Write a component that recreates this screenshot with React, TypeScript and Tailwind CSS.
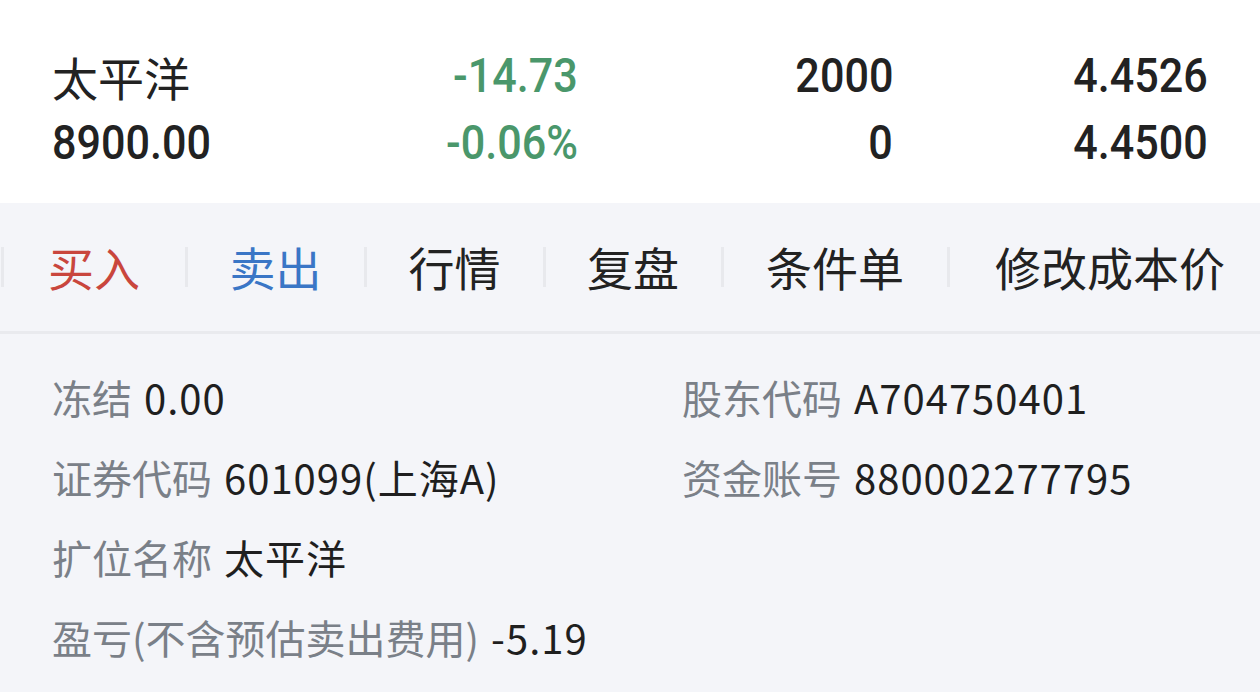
const quote = [
  { name: "太平洋", change: "-14.73", qty: "2000", cost: "4.4526" },
  { name: "8900.00", change: "-0.06%", qty: "0", cost: "4.4500" },
];

const tabs = [
  { label: "买入", color: "text-[#c9463d]", w: "w-[180px]" },
  { label: "卖出", color: "text-[#3a76c6]", w: "w-[175px]" },
  { label: "行情", color: "text-[#222222]", w: "w-[175px]" },
  { label: "复盘", color: "text-[#222222]", w: "w-[174px]" },
  { label: "条件单", color: "text-[#222222]", w: "w-[222px]" },
  { label: "修改成本价", color: "text-[#222222]", w: "w-[320px]" },
];

const details = [
  { label: "冻结", value: "0.00" },
  { label: "股东代码", value: "A704750401" },
  { label: "证券代码", value: "601099(上海A)" },
  { label: "资金账号", value: "880002277795" },
  { label: "扩位名称", value: "太平洋" },
  { label: "", value: "" },
];

const Num = ({ text, origin }: { text: string; origin: string }) => (
  <span className={`inline-block scale-x-[0.88] ${origin}`}>{text}</span>
);

export default function App() {
  return (
    <div className="w-[1260px] h-[692px] overflow-hidden bg-[#f4f5f9] font-['Roboto','Noto_Sans_CJK_SC',sans-serif]">
      {/* Position summary */}
      <div className="bg-white h-[203px] px-[52px] pt-[42px]">
        {quote.map((row, i) => (
          <div
            key={i}
            className="grid grid-cols-[211px_315px_315px_315px] h-[67px] items-center leading-none font-medium text-[#222222]"
          >
            <div className={i === 0 ? "text-[46px] font-normal font-['Noto_Sans_CJK_SC',sans-serif]" : "text-[49px]"}>
              {i === 0 ? row.name : <Num text={row.name} origin="origin-left" />}
            </div>
            <div className="text-right text-[49px] text-[#4a976b]">
              <Num text={row.change} origin="origin-right" />
            </div>
            <div className="text-right text-[49px]">
              <Num text={row.qty} origin="origin-right" />
            </div>
            <div className="text-right text-[49px]">
              <Num text={row.cost} origin="origin-right" />
            </div>
          </div>
        ))}
      </div>

      {/* Actions */}
      <div className="h-[131px] flex items-center border-b-[3px] border-[#e9eaee] whitespace-nowrap font-['Noto_Sans_CJK_SC',sans-serif]">
        {tabs.map((t) => (
          <div key={t.label} className="flex items-center shrink-0">
            <div className="w-[3px] h-[40px] bg-[#e8e9ed] ml-px" />
            <div className={`${t.w} text-center text-[46px] leading-none pb-[3px] ${t.color}`}>
              {t.label}
            </div>
          </div>
        ))}
      </div>

      {/* Details */}
      <div className="pl-[52px] pt-[23px] grid grid-cols-[630px_1fr] text-[40px] leading-[80px] font-['Noto_Sans_CJK_SC',sans-serif]">
        {details.map((d, i) => (
          <div key={i} className="h-[80px] whitespace-nowrap">
            {d.label && (
              <>
                <span className="text-[#7a8088]">{d.label}</span>
                <span className="text-[#1f1f1f] ml-[12px] tracking-[1px]">{d.value}</span>
              </>
            )}
          </div>
        ))}
        <div className="h-[80px] whitespace-nowrap col-span-2">
          <span className="text-[#7a8088]">盈亏(不含预估卖出费用)</span>
          <span className="text-[#1f1f1f] ml-[12px] tracking-[1px]">-5.19</span>
        </div>
      </div>
    </div>
  );
}
